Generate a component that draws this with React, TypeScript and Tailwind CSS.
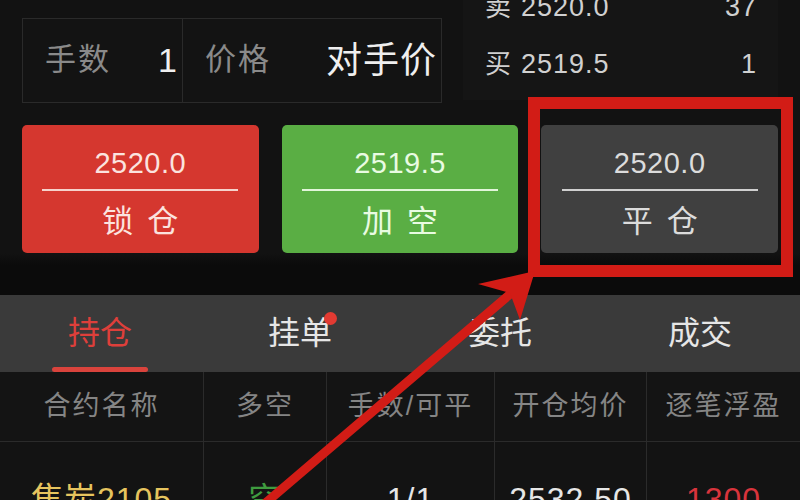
import React from "react";

const FONT = "font-['Liberation_Sans','Noto_Sans_CJK_SC',sans-serif]";

function ActionButton({
  price,
  label,
  bg,
  fg,
  line,
}: {
  price: string;
  label: string;
  bg: string;
  fg: string;
  line: string;
}) {
  return (
    <div className={`flex h-[128px] flex-col items-center rounded-[5px] ${bg}`}>
      <div className={`mt-[24px] h-[28px] text-[29px] leading-[28px] tracking-[0.5px] ${fg}`}>{price}</div>
      <div className={`mt-[12px] h-[2px] w-[196px] ${line}`} />
      <div className={`mt-[15px] pl-[14px] text-[31px] leading-[31px] tracking-[14px] ${fg}`}>{label}</div>
    </div>
  );
}

export default function App() {
  const cols = ["w-[204px]", "w-[123px]", "w-[168px]", "w-[152px]", "flex-1"];
  const headers = ["合约名称", "多空", "手数/可平", "开仓均价", "逐笔浮盈"];
  const row = [
    { t: "焦炭2105", c: "text-[#e6c45e]" },
    { t: "空", c: "text-[#3f9c3f]" },
    { t: "1/1", c: "text-[#e6e6e6]" },
    { t: "2532.50", c: "text-[#e6e6e6]" },
    { t: "1300", c: "text-[#d8343c]" },
  ];
  return (
    <div className={`relative h-[500px] w-[800px] overflow-hidden bg-[#121212] ${FONT}`}>
      {/* top section */}
      <div className="flex h-[112px]">
        <div className="ml-[22px] mt-[18px] flex h-[85px] w-[420px] border border-[#2a2a2a] bg-[#131313]">
          <div className="flex w-[160px] items-center justify-between border-r border-[#2a2a2a] pl-[22px] pr-[5px]">
            <span className="text-[31px] tracking-[2px] text-[#8a8a8a]">手数</span>
            <span className="text-[34px] text-[#efefef]">1</span>
          </div>
          <div className="flex flex-1 items-center justify-between pl-[22px] pr-[4px]">
            <span className="text-[31px] tracking-[2px] text-[#8a8a8a]">价格</span>
            <span className="text-[36px] tracking-[1px] text-[#efefef]">对手价</span>
          </div>
        </div>
        <div className="ml-[21px] h-[100px] w-[315px] overflow-hidden bg-[#151515]">
          <div className="-mt-[21px] flex flex-col">
            {[
              ["卖", "2520.0", "37"],
              ["买", "2519.5", "1"],
            ].map(([a, b, c]) => (
              <div key={b} className="flex h-[57px] items-center pl-[22px] pr-[21px] text-[27px] text-[#d0d0d0]">
                <span className="text-[26px]">{a}</span>
                <span className="ml-[10px] tracking-[1px]">{b}</span>
                <span className="ml-auto tracking-[1px]">{c}</span>
              </div>
            ))}
          </div>
        </div>
      </div>

      {/* buttons */}
      <div className="mt-[13px] grid grid-cols-3 gap-[23px] px-[22px]">
        <ActionButton price="2520.0" label="锁仓" bg="bg-[#d5372f]" fg="text-[#fbe3df]" line="bg-[#f6d2cc]" />
        <ActionButton price="2519.5" label="加空" bg="bg-[#5aae44]" fg="text-[#e9fbe2]" line="bg-[#e2f6da]" />
        <ActionButton price="2520.0" label="平仓" bg="bg-[#404040]" fg="text-[#dcdcdc]" line="bg-[#d0d0d0]" />
      </div>
      <div className="h-[42px] bg-[linear-gradient(#121212,#0b0b0b_30%,#0b0b0b)]" />

      {/* tabs */}
      <div className="grid h-[77px] grid-cols-4 bg-[#3a3a3a]">
        {["持仓", "挂单", "委托", "成交"].map((t, i) => (
          <div key={t} className="relative flex items-center justify-center pb-[2px]">
            <span className={`relative text-[32px] leading-none ${i === 0 ? "text-[#de3f3a]" : "text-[#e6e6e6]"}`}>
              {t}
              {i === 1 && (
                <span className="absolute -right-[5px] -top-[5px] h-[13px] w-[13px] rounded-full bg-[#e23a32]" />
              )}
            </span>
            {i === 0 && (
              <span className="absolute bottom-[0px] left-[52px] h-[5px] w-[96px] rounded-full bg-[#d9433c]" />
            )}
          </div>
        ))}
      </div>

      {/* table header */}
      <div className="flex h-[70px] border-b border-[#2b2b2b] bg-[#141414]">
        {headers.map((h, i) => (
          <div
            key={h}
            className={`flex items-center justify-center text-[27px] tracking-[2px] text-[#858585] ${cols[i]} ${
              i < 4 ? "border-r border-[#2b2b2b]" : ""
            }`}
          >
            {h}
          </div>
        ))}
      </div>
      <div className="flex h-[110px] bg-[#131313]">
        {row.map((r, i) => (
          <div
            key={r.t}
            className={`flex items-center justify-center pt-[4px] text-[32px] tracking-[1px] ${r.c} ${cols[i]} ${
              i < 4 ? "border-r border-[#2b2b2b]" : ""
            }`}
          >
            {r.t}
          </div>
        ))}
      </div>

      {/* annotation overlay */}
      <svg className="pointer-events-none absolute left-0 top-0" width="800" height="500" viewBox="0 0 800 500">
        <rect x="534" y="103" width="253" height="168" fill="none" stroke="#d21c16" strokeWidth="12" />
        <line x1="262" y1="506" x2="522" y2="284" stroke="#d21c16" strokeWidth="9" strokeLinecap="round" />
        <polygon points="535,271 478,284 510,293 520,320" fill="#d21c16" />
      </svg>
    </div>
  );
}
